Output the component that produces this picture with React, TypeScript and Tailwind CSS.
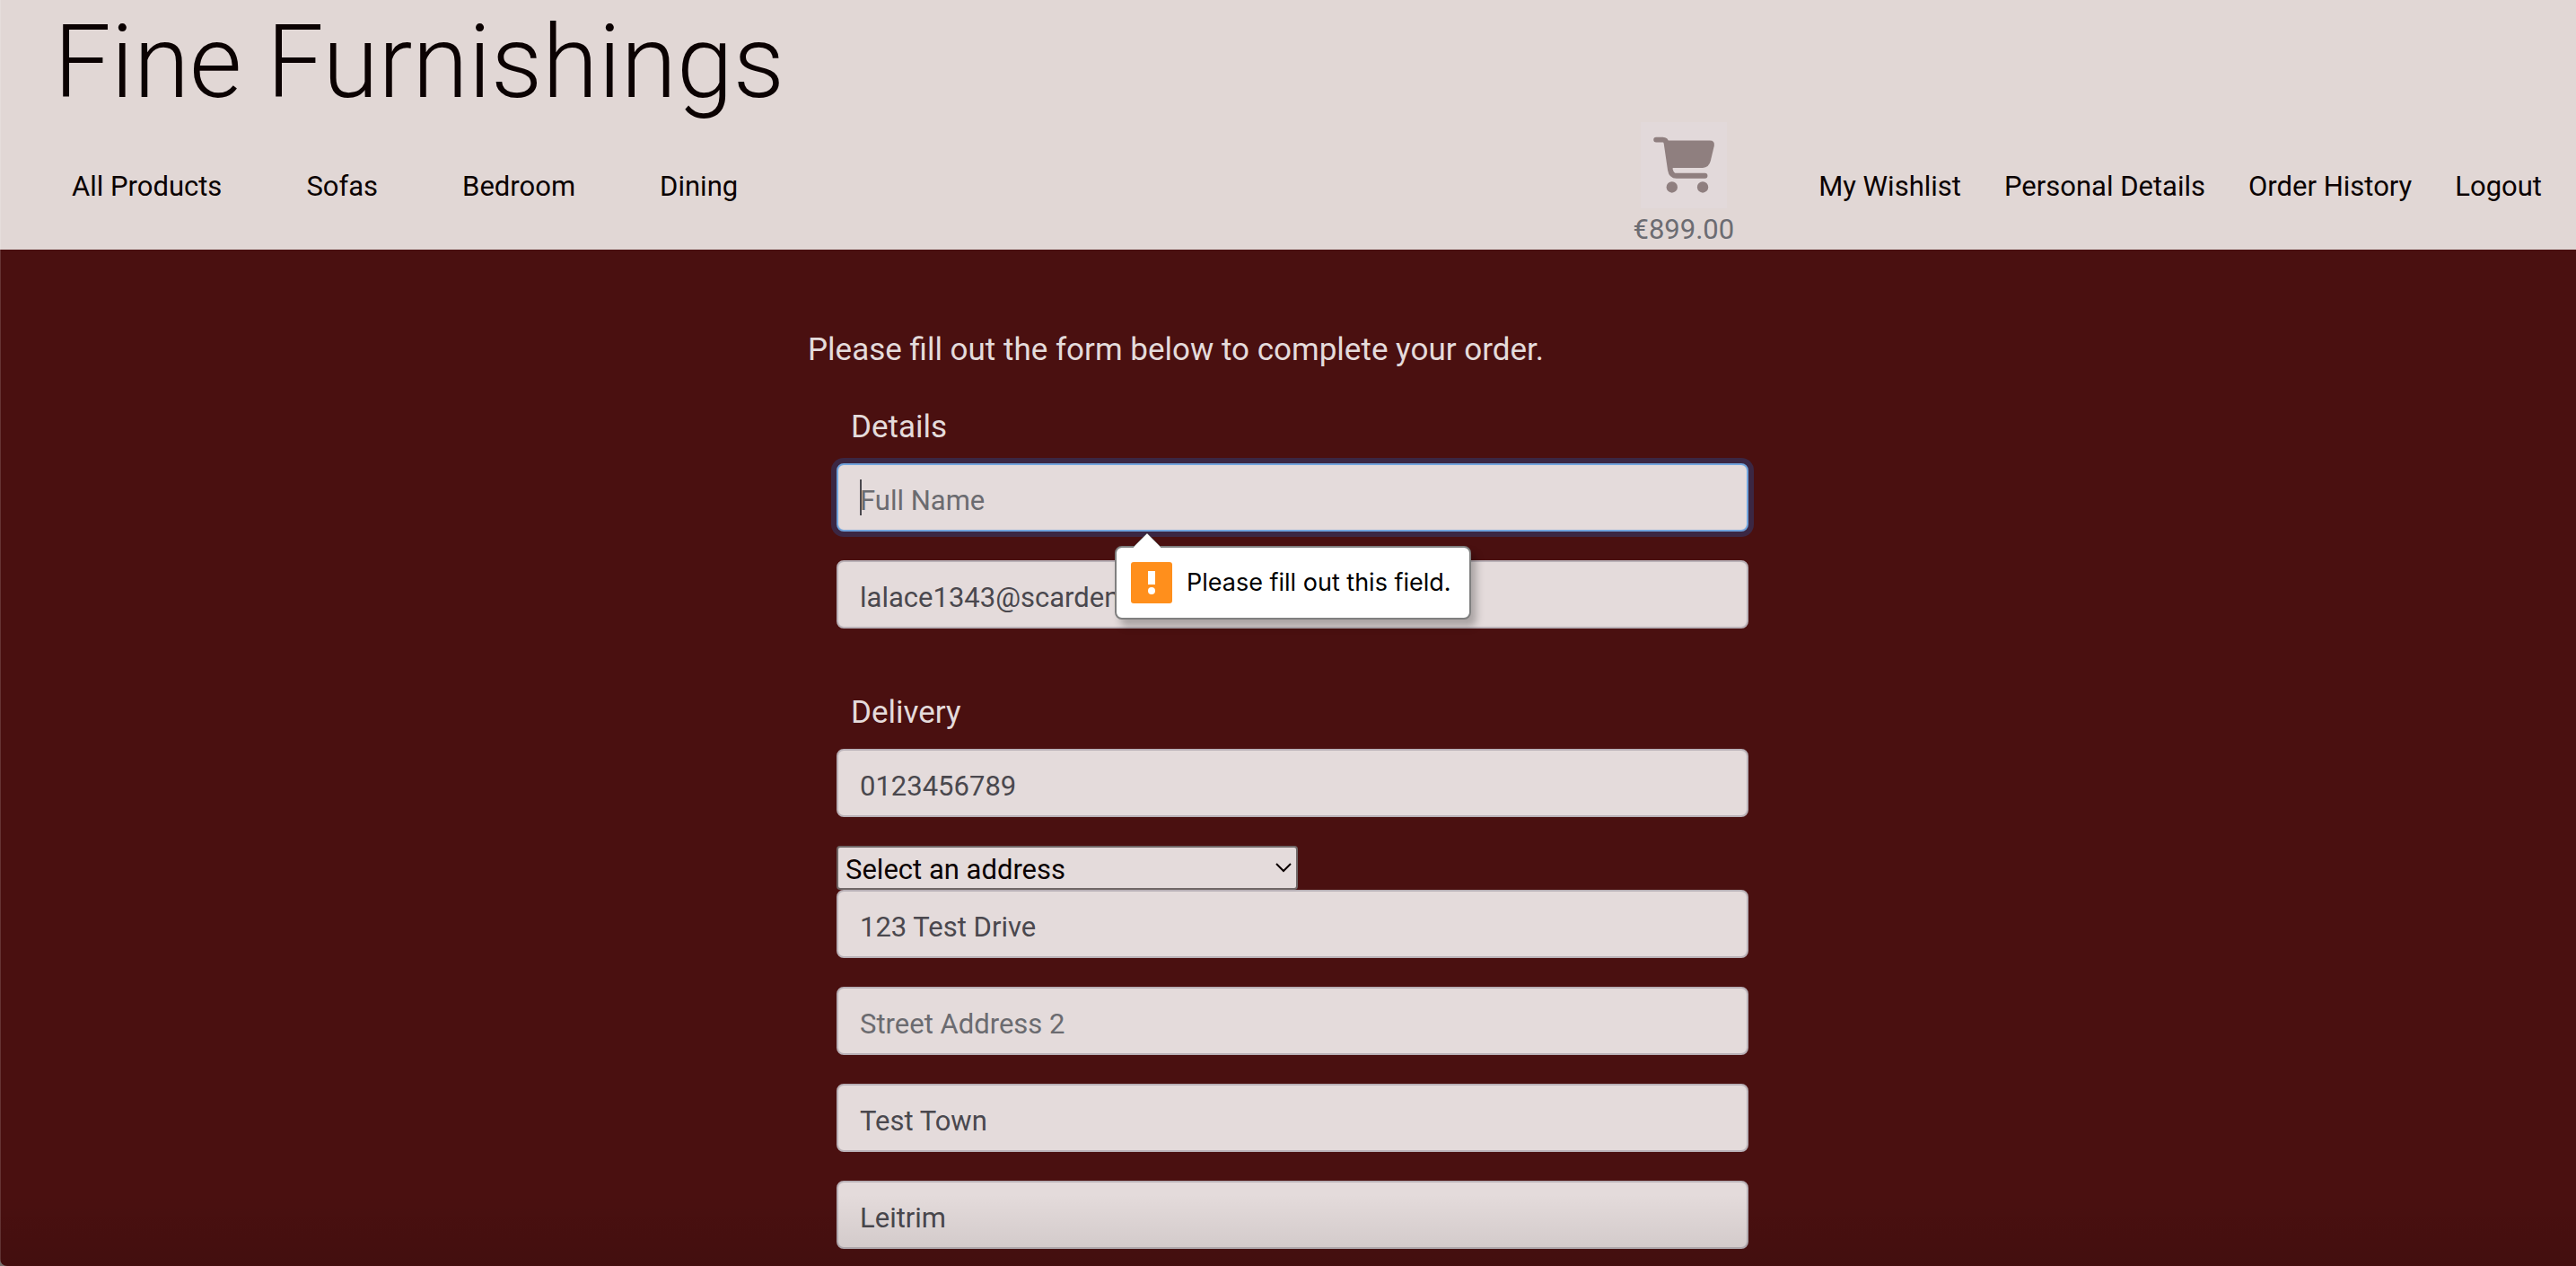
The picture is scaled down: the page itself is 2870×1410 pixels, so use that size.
import type { InputHTMLAttributes, ReactNode } from "react";

const SHOP_LINKS = ["All Products", "Sofas", "Bedroom", "Dining"];
const ACCOUNT_LINKS = ["My Wishlist", "Personal Details", "Order History", "Logout"];

function CartIcon() {
  return (
    <span className="block bg-[#e2d9da] p-px">
      <svg viewBox="0 0 96 96" className="size-[94px]" fill="none" aria-hidden="true">
        <path
          d="M16.500 19h7.500q3.600 0 4.200 4l4.400 30q1.200 7 7 7h32.400"
          stroke="#8f7f7f"
          strokeWidth="6"
          strokeLinecap="round"
          strokeLinejoin="round"
        />
        <path
          d="M26 20h51.500q6 0 5 6l-4 17q-2 8-9 8H31z"
          fill="#8f7f7f"
        />
        <circle cx="34.500" cy="73" r="6.300" fill="#8f7f7f" />
        <circle cx="69.500" cy="73" r="6.300" fill="#8f7f7f" />
      </svg>
    </span>
  );
}

function Header() {
  return (
    <header className="bg-[#e1d7d5] text-[31px] leading-10 text-[#0b0202]">
      <h1 className="pt-1 pl-[60px] text-[113px] leading-[132px] font-light">
        <a href="#home">Fine Furnishings</a>
      </h1>
      <div className="flex items-center justify-between pr-[38px] pb-0.5 pl-20">
        <nav aria-label="Shop" className="flex gap-[94px] pt-1">
          {SHOP_LINKS.map((label) => (
            <a key={label} href="#shop">
              {label}
            </a>
          ))}
        </nav>
        <div className="flex items-center gap-[94px]">
          <a href="#bag" aria-label="Shopping bag" className="flex flex-col items-center text-[#6c6c72]">
            <CartIcon />
            <span className="mt-1">€899.00</span>
          </a>
          <nav aria-label="Account" className="flex gap-12 pt-1">
            {ACCOUNT_LINKS.map((label) => (
              <a key={label} href="#account">
                {label}
              </a>
            ))}
          </nav>
        </div>
      </div>
    </header>
  );
}

interface FieldProps extends InputHTMLAttributes<HTMLInputElement> {
  label: string;
  active?: boolean;
}

function Field({ label, active = false, ...rest }: FieldProps) {
  const tone = active
    ? "border-[#72a5dd] shadow-[0_0_0_6px_#3b2743]"
    : "border-[#b9b1b7]";
  return (
    <input
      aria-label={label}
      className={`${tone} block h-[76px] w-full rounded-lg border-2 bg-[#e4dbdb] px-6 pt-1.5 text-[31px] text-[#4a484e] outline-none placeholder:text-[#6b6b70]`}
      {...rest}
    />
  );
}

function RequiredHint() {
  return (
    <div
      role="alert"
      className="absolute top-[92px] left-[310px] z-10 flex items-center gap-4 rounded-lg border-2 border-[#7f7f7f] bg-white py-4 pr-5 pl-4 font-['Inter',sans-serif] text-[27px] leading-[46px] whitespace-nowrap text-black shadow-[6px_8px_8px_rgba(0,0,0,0.25)]"
    >
      <svg viewBox="0 0 34 18" className="absolute -top-[17px] left-[17px] h-[18px] w-[34px]" aria-hidden="true">
        <path d="M0 18 17 1l17 17z" fill="#fff" />
        <path d="M1 17 17 1l16 16" fill="none" stroke="#7f7f7f" strokeWidth="1" />
      </svg>
      <svg viewBox="0 0 46 46" className="size-[46px]" aria-hidden="true">
        <rect width="46" height="46" rx="3" fill="#ff8f1c" />
        <path d="M19 10h8v15h-8z" fill="#fff" />
        <circle cx="23" cy="32" r="4" fill="#fff" />
      </svg>
      <span>Please fill out this field.</span>
    </div>
  );
}

function Group({ title, children }: { title: string; children: ReactNode }) {
  return (
    <fieldset className="pr-[22px] pl-8">
      <legend className="mb-3.5 pl-4 leading-[52px]">{title}</legend>
      {children}
    </fieldset>
  );
}

export default function App() {
  return (
    <div className="bg-[#77706c]">
      <div className="relative h-screen overflow-hidden rounded-bl-lg bg-[#4a1010] font-['Roboto',sans-serif]">
        <Header />
        <main className="mx-auto w-full max-w-[1070px] pt-[86px] text-[35px] text-[#e4dbdb]">
          <p className="leading-[52px]">Please fill out the form below to complete your order.</p>
          <form className="mt-[34px] flex flex-col gap-[68px]" noValidate>
            <Group title="Details">
              <div className="flex flex-col gap-8">
                <div className="relative">
                  <Field label="Full Name" placeholder="Full Name" active required />
                  <span className="absolute top-[18px] left-[26px] h-10 w-0.5 bg-[#4a484e]" />
                  <RequiredHint />
                </div>
                <Field label="Email" type="email" defaultValue="lalace1343@scarden" />
              </div>
            </Group>
            <Group title="Delivery">
              <Field label="Phone Number" type="tel" defaultValue="0123456789" />
              <div className="relative mt-8 w-[514px]">
                <select
                  aria-label="Saved addresses"
                  className="block h-[49px] w-full appearance-none rounded border-2 border-[#6f6666] bg-[#e4dbdb] pt-1 pl-2 text-[31px] leading-10 text-[#0b0202]"
                >
                  <option>Select an address</option>
                </select>
                <svg
                  viewBox="0 0 18 12"
                  className="pointer-events-none absolute top-[18px] right-[7px] h-3 w-[18px]"
                  fill="none"
                  stroke="#0b0202"
                  strokeWidth="2"
                  aria-hidden="true"
                >
                  <path d="m1 2 8 8 8-8" />
                </svg>
              </div>
              <div className="flex flex-col gap-8">
                <Field label="Street Address 1" defaultValue="123 Test Drive" />
                <Field label="Street Address 2" placeholder="Street Address 2" />
                <Field label="Town or City" defaultValue="Test Town" />
                <Field label="County" defaultValue="Leitrim" />
              </div>
            </Group>
          </form>
        </main>
        <div className="pointer-events-none absolute inset-x-0 bottom-0 h-20 bg-linear-to-t from-black/10 to-transparent" />
        <div className="pointer-events-none absolute inset-y-0 left-0 w-px bg-white/15" />
      </div>
    </div>
  );
}
